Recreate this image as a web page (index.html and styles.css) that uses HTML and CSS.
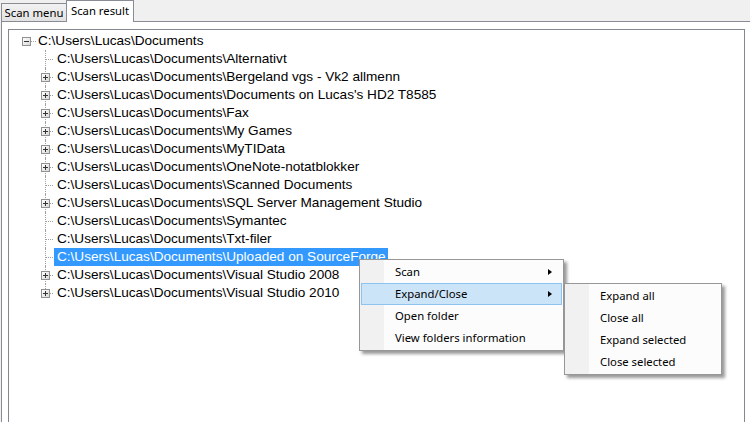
FILE: index.html
```html
<!DOCTYPE html>
<html>
<head>
<meta charset="utf-8">
<link rel="stylesheet" href="styles.css">
</head>
<body>
<div class="tabs">
  <div class="tab">Scan menu</div>
  <div class="tab active">Scan result</div>
</div>
<div class="page">
  <div class="tree">
    <div class="row root">
      <span class="exp minus"></span>
      <span class="label">C:\Users\Lucas\Documents</span>
    </div>
    <div class="children">
      <div class="row child"><span class="label">C:\Users\Lucas\Documents\Alternativt</span></div>
      <div class="row child"><span class="exp plus"></span><span class="label">C:\Users\Lucas\Documents\Bergeland vgs - Vk2 allmenn</span></div>
      <div class="row child"><span class="exp plus"></span><span class="label">C:\Users\Lucas\Documents\Documents on Lucas's HD2 T8585</span></div>
      <div class="row child"><span class="exp plus"></span><span class="label">C:\Users\Lucas\Documents\Fax</span></div>
      <div class="row child"><span class="exp plus"></span><span class="label">C:\Users\Lucas\Documents\My Games</span></div>
      <div class="row child"><span class="exp plus"></span><span class="label">C:\Users\Lucas\Documents\MyTIData</span></div>
      <div class="row child"><span class="exp plus"></span><span class="label">C:\Users\Lucas\Documents\OneNote-notatblokker</span></div>
      <div class="row child"><span class="label">C:\Users\Lucas\Documents\Scanned Documents</span></div>
      <div class="row child"><span class="exp plus"></span><span class="label">C:\Users\Lucas\Documents\SQL Server Management Studio</span></div>
      <div class="row child"><span class="label">C:\Users\Lucas\Documents\Symantec</span></div>
      <div class="row child"><span class="label">C:\Users\Lucas\Documents\Txt-filer</span></div>
      <div class="row child"><span class="label selected">C:\Users\Lucas\Documents\Uploaded on SourceForge</span></div>
      <div class="row child"><span class="exp plus"></span><span class="label">C:\Users\Lucas\Documents\Visual Studio 2008</span></div>
      <div class="row child last"><span class="exp plus"></span><span class="label">C:\Users\Lucas\Documents\Visual Studio 2010</span></div>
    </div>
  </div>
</div>

<div class="menu main-menu">
  <div class="item">Scan<span class="arrow"></span></div>
  <div class="item hot">Expand/Close<span class="arrow"></span></div>
  <div class="item">Open folder</div>
  <div class="item">View folders information</div>
</div>
<div class="menu sub-menu">
  <div class="item">Expand all</div>
  <div class="item">Close all</div>
  <div class="item">Expand selected</div>
  <div class="item">Close selected</div>
</div>
</body>
</html>
```
FILE: styles.css
```css
html, body {
  margin: 0;
  padding: 0;
  width: 750px;
  height: 422px;
  overflow: hidden;
  background: #f0f0f0;
}
body {
  font-family: "Liberation Sans", Arial, sans-serif;
  font-size: 13.6px;
  color: #000;
  position: relative;
}
.tabs {
  display: flex;
  align-items: flex-end;
  height: 21px;
  padding-left: 1px;
  position: relative;
  z-index: 2;
}
.tab {
  font-family: "Noto Sans", "Open Sans", sans-serif;
  font-size: 11.3px;
  white-space: nowrap;
  box-sizing: border-box;
  height: 18px;
  line-height: 18px;
  width: 66px;
  text-align: center;
  border: 1px solid #898c95;
  border-bottom: none;
  background: linear-gradient(#f2f2f2, #e2e2e2);
}
.tab.active {
  height: 22px;
  line-height: 19px;
  width: 68px;
  background: #fff;
  margin-left: -1px;
  margin-bottom: -1px;
}
.page {
  margin-left: 1px;
  border-top: 1px solid #898c95;
  border-left: 1px solid #898c95;
  background: #fff;
  padding: 7px 0 0 6px;
  height: 400px;
}
.tree {
  width: 737px;
  height: 400px;
  border: 1px solid #828790;
  background: #fff;
  padding-top: 2px;
  box-sizing: border-box;
}
.row {
  height: 18px;
  line-height: 18px;
  position: relative;
  white-space: nowrap;
}
.root {
  padding-left: 26px;
}
.child {
  padding-left: 45px;
}
.label {
  display: inline-block;
  height: 18px;
  padding: 0 2px 0 3px;
}
.label.selected {
  background: #3399ff;
  color: #fff;
}
.root::after {
  content: "";
  position: absolute;
  left: 22px;
  top: 9px;
  width: 5px;
  border-top: 1px dotted #a0a0a0;
}
.child::before {
  content: "";
  position: absolute;
  left: 36px;
  top: 0;
  height: 18px;
  border-left: 1px dotted #a0a0a0;
}
.child.last::before {
  height: 9px;
}
.child::after {
  content: "";
  position: absolute;
  left: 37px;
  top: 9px;
  width: 7px;
  border-top: 1px dotted #a0a0a0;
}
.exp {
  position: absolute;
  width: 7px;
  height: 7px;
  top: 5px;
  border: 1px solid #919191;
  background: linear-gradient(135deg, #ffffff, #d8d8d8);
  z-index: 1;
}
.root .exp {
  left: 13px;
}
.child .exp {
  left: 32px;
}
.exp::before {
  content: "";
  position: absolute;
  left: 1px;
  top: 3px;
  width: 5px;
  height: 1px;
  background: #333;
}
.exp.plus::after {
  content: "";
  position: absolute;
  left: 3px;
  top: 1px;
  width: 1px;
  height: 5px;
  background: #333;
}
.menu {
  position: absolute;
  font-family: "Noto Sans", "Open Sans", sans-serif;
  font-size: 11.3px;
  border: 1px solid #979797;
  background: linear-gradient(90deg, #f1f1f1 0, #f1f1f1 24px, #fcfcfc 24px);
  padding: 1px 0;
  box-shadow: 3px 3px 3px rgba(0, 0, 0, 0.4);
  z-index: 5;
}
.main-menu {
  left: 359px;
  top: 259px;
  width: 203px;
}
.sub-menu {
  left: 564px;
  top: 283px;
  width: 156px;
}
.item {
  height: 22px;
  line-height: 19px;
  position: relative;
  margin: 0 1px;
  box-sizing: border-box;
  padding-left: 33px;
  border: 1px solid transparent;
}
.item.hot {
  background: #cce4f7;
  border-color: #8ec3ef;
}
.arrow {
  position: absolute;
  left: 186px;
  top: 7px;
  width: 0;
  height: 0;
  border-top: 3.5px solid transparent;
  border-bottom: 3.5px solid transparent;
  border-left: 4px solid #000;
}
```
